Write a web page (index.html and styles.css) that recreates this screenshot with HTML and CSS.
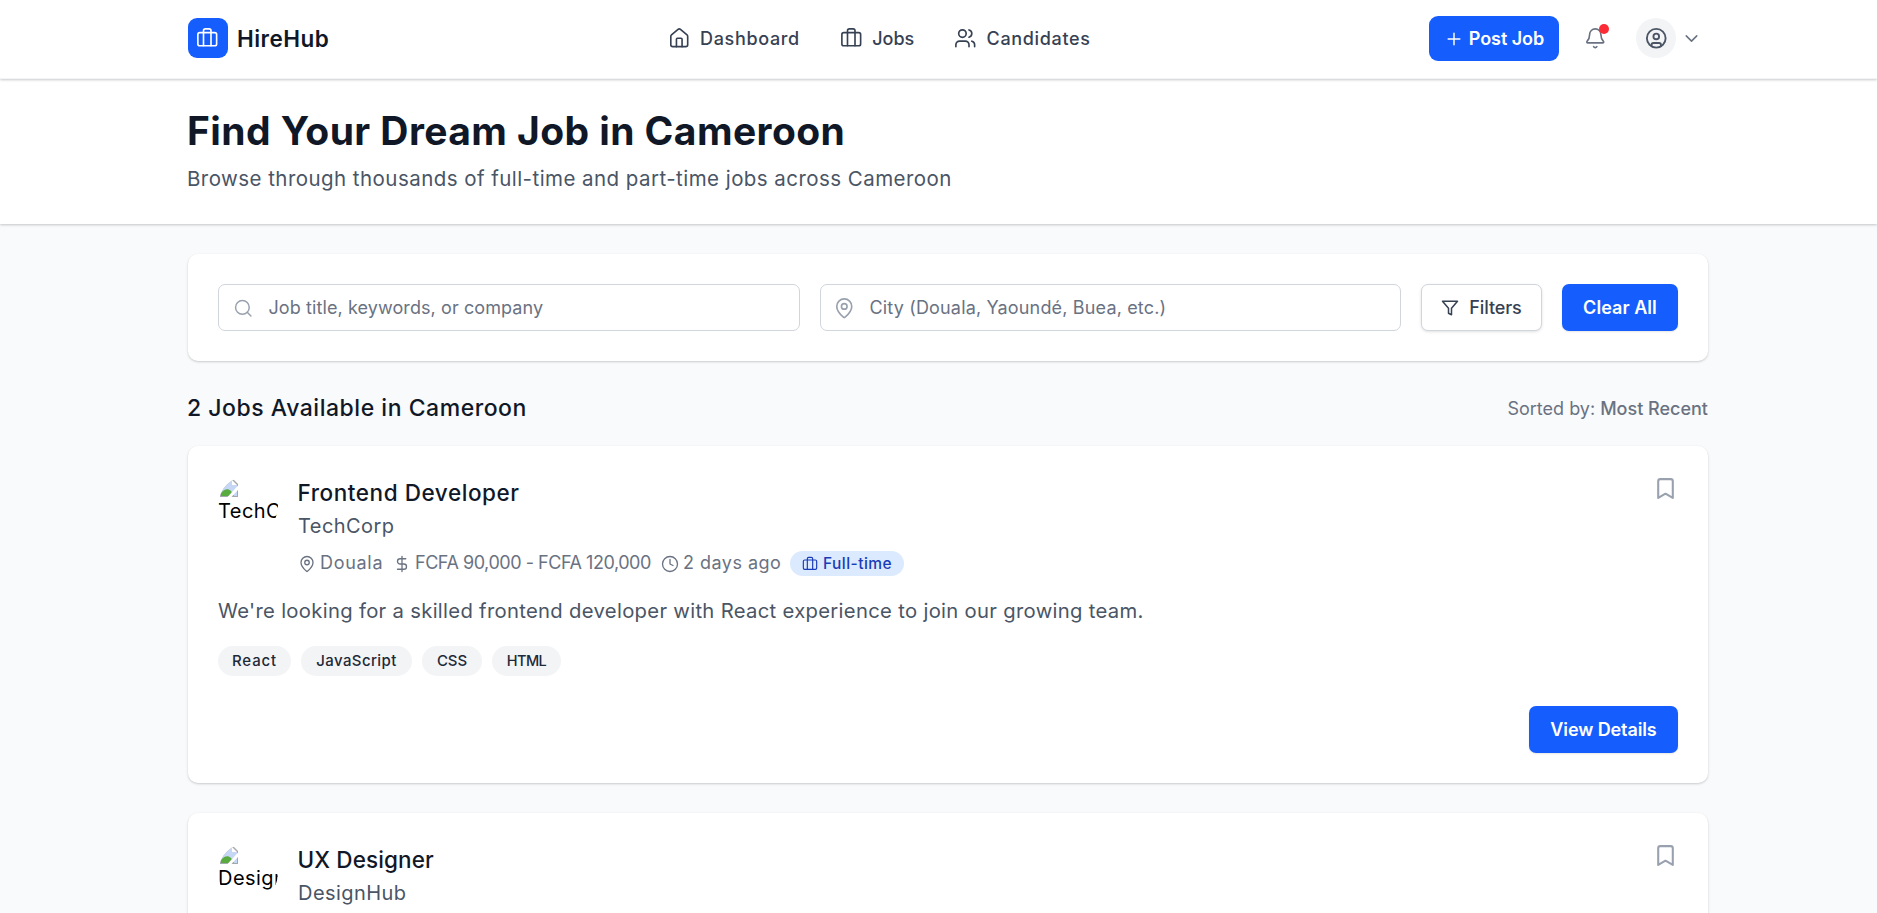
FILE: index.html
```html
<!DOCTYPE html>
<html lang="en">
<head>
<meta charset="utf-8">
<title>HireHub</title>
<link rel="stylesheet" href="styles.css">
</head>
<body>
<svg class="sprite" aria-hidden="true">
  <symbol id="briefcase" viewBox="0 0 24 24"><path d="M16 20V4a2 2 0 0 0-2-2h-4a2 2 0 0 0-2 2v16"/><rect x="2" y="6" width="20" height="14" rx="2"/></symbol>
  <symbol id="house" viewBox="0 0 24 24"><path d="M15 21v-8a1 1 0 0 0-1-1h-4a1 1 0 0 0-1 1v8"/><path d="M3 10a2 2 0 0 1 .709-1.528l7-5.999a2 2 0 0 1 2.582 0l7 5.999A2 2 0 0 1 21 10v9a2 2 0 0 1-2 2H5a2 2 0 0 1-2-2z"/></symbol>
  <symbol id="users" viewBox="0 0 24 24"><path d="M16 21v-2a4 4 0 0 0-4-4H6a4 4 0 0 0-4 4v2"/><circle cx="9" cy="7" r="4"/><path d="M22 21v-2a4 4 0 0 0-3-3.87"/><path d="M16 3.13a4 4 0 0 1 0 7.75"/></symbol>
  <symbol id="plus" viewBox="0 0 24 24"><path d="M5 12h14M12 5v14"/></symbol>
  <symbol id="bell" viewBox="0 0 24 24"><path d="M10.268 21a2 2 0 0 0 3.464 0"/><path d="M3.262 15.326A1 1 0 0 0 4 17h16a1 1 0 0 0 .74-1.673C19.41 13.956 18 12.499 18 8A6 6 0 0 0 6 8c0 4.499-1.411 5.956-2.738 7.326"/></symbol>
  <symbol id="user" viewBox="0 0 24 24"><circle cx="12" cy="12" r="10"/><circle cx="12" cy="10" r="3"/><path d="M7 20.662V19a2 2 0 0 1 2-2h6a2 2 0 0 1 2 2v1.662"/></symbol>
  <symbol id="chevron" viewBox="0 0 24 24"><path d="m6 9 6 6 6-6"/></symbol>
  <symbol id="search" viewBox="0 0 24 24"><circle cx="11" cy="11" r="8"/><path d="m21 21-4.34-4.34"/></symbol>
  <symbol id="pin" viewBox="0 0 24 24"><path d="M20 10c0 4.993-5.539 10.193-7.399 11.799a1 1 0 0 1-1.202 0C9.539 20.193 4 14.993 4 10a8 8 0 0 1 16 0"/><circle cx="12" cy="10" r="3"/></symbol>
  <symbol id="filter" viewBox="0 0 24 24"><path d="M22 3H2l8 9.46V19l4 2v-8.54z"/></symbol>
  <symbol id="dollar" viewBox="0 0 24 24"><path d="M12 2v20"/><path d="M17 5H9.5a3.5 3.5 0 0 0 0 7h5a3.5 3.5 0 0 1 0 7H6"/></symbol>
  <symbol id="clock" viewBox="0 0 24 24"><circle cx="12" cy="12" r="10"/><path d="M12 6v6l4 2"/></symbol>
  <symbol id="bookmark" viewBox="0 0 24 24"><path d="m19 21-7-4-7 4V5a2 2 0 0 1 2-2h10a2 2 0 0 1 2 2z"/></symbol>
  <symbol id="broken" viewBox="0 0 18 18"><g stroke="none"><path d="M0 0h13l5 5v13H0z" fill="#a5a8ab"/><path d="M1 1h11v5h5v11H1z" fill="#c6d7f6"/><path d="M12 1v5h5z" fill="#fff"/><path d="M1 17v-3c3-4 7-5 10-2l3 5z" fill="#5aab3f"/><path d="M18 6.5 7.5 18h4L18 11z" fill="#fff"/></g></symbol>
</svg>

<header class="topbar">
  <div class="container topbar-inner">
    <div class="brand"><span class="brand-mark"><svg class="icon"><use href="#briefcase"/></svg></span><span class="brand-name">HireHub</span></div>
    <nav class="nav">
      <a class="nav-link"><svg class="icon"><use href="#house"/></svg><span>Dashboard</span></a>
      <a class="nav-link nav-jobs"><svg class="icon"><use href="#briefcase"/></svg><span>Jobs</span></a>
      <a class="nav-link"><svg class="icon"><use href="#users"/></svg><span>Candidates</span></a>
    </nav>
    <div class="actions">
      <button class="post"><svg class="icon"><use href="#plus"/></svg><span>Post Job</span></button>
      <div class="bell"><svg class="icon"><use href="#bell"/></svg><i class="dot"></i></div>
      <div class="account"><span class="avatar"><svg class="icon"><use href="#user"/></svg></span><svg class="icon chevron"><use href="#chevron"/></svg></div>
    </div>
  </div>
</header>

<section class="hero">
  <div class="container">
    <h1>Find Your Dream Job in Cameroon</h1>
    <p>Browse through thousands of full-time and part-time jobs across Cameroon</p>
  </div>
</section>

<main class="container main">
  <div class="card search">
    <div class="field"><svg class="icon"><use href="#search"/></svg><span class="ph-job">Job title, keywords, or company</span></div>
    <div class="field"><svg class="icon field-pin"><use href="#pin"/></svg><span class="ph-city">City (Douala, Yaoundé, Buea, etc.)</span></div>
    <button class="btn btn-outline"><svg class="icon"><use href="#filter"/></svg><span>Filters</span></button>
    <button class="btn btn-primary btn-clear">Clear All</button>
  </div>

  <div class="results">
    <h2>2 Jobs Available in Cameroon</h2>
    <div class="sorted">Sorted by: <b>Most Recent</b></div>
  </div>

  <article class="card job">
    <div class="job-head">
      <div class="logo"><svg class="icon"><use href="#broken"/></svg><span>TechCorp</span></div>
      <div class="job-info">
        <h3 class="title-fe">Frontend Developer</h3>
        <div class="company">TechCorp</div>
        <div class="meta">
          <span class="meta-item meta-city"><svg class="icon"><use href="#pin"/></svg><span>Douala</span></span>
          <span class="meta-item meta-pay"><svg class="icon"><use href="#dollar"/></svg><span>FCFA 90,000 - FCFA 120,000</span></span>
          <span class="meta-item meta-time"><svg class="icon"><use href="#clock"/></svg><span>2 days ago</span></span>
          <span class="badge"><svg class="icon"><use href="#briefcase"/></svg><span>Full-time</span></span>
        </div>
      </div>
      <svg class="icon bookmark"><use href="#bookmark"/></svg>
    </div>
    <p class="desc">We're looking for a skilled frontend developer with React experience to join our growing team.</p>
    <div class="tags"><span class="tag tag-react">React</span><span class="tag tag-js">JavaScript</span><span class="tag tag-css">CSS</span><span class="tag tag-html">HTML</span></div>
    <div class="job-foot"><button class="btn btn-primary btn-view">View Details</button></div>
  </article>

  <article class="card job">
    <div class="job-head">
      <div class="logo"><svg class="icon"><use href="#broken"/></svg><span>DesignHub</span></div>
      <div class="job-info">
        <h3 class="title-ux">UX Designer</h3>
        <div class="company">DesignHub</div>
      </div>
      <svg class="icon bookmark"><use href="#bookmark"/></svg>
    </div>
  </article>
</main>
</body>
</html>
```
FILE: styles.css
```css
* { box-sizing: border-box; margin: 0; padding: 0; }
html { height: 100%; overflow: hidden; }
body {
  height: 913px;
  overflow: hidden;
  background: #f9fafb;
  color: #000;
  font: 400 18px/26px Inter, "Liberation Sans", sans-serif;
  white-space: nowrap;
}
button { font: inherit; border: 0; }
.sprite { display: none; }
.icon {
  display: block;
  flex: none;
  width: 22.5px;
  height: 22.5px;
  fill: none;
  stroke: currentColor;
  stroke-width: 1.75;
  stroke-linecap: round;
  stroke-linejoin: round;
}
.container { width: 1520px; margin-left: 188px; }

/* Top bar */
.topbar {
  position: relative;
  height: 79px;
  padding-bottom: 2px;
  background: #fff;
  border-bottom: 1px solid #f3f4f6;
  box-shadow: 0 1px 3px rgba(0, 0, 0, .12), 0 1px 2px rgba(0, 0, 0, .1);
}
.topbar-inner { display: flex; align-items: center; justify-content: space-between; height: 76px; }
.brand { display: flex; align-items: center; gap: 9px; }
.brand-mark {
  display: grid;
  place-items: center;
  width: 40px;
  height: 40px;
  border-radius: 9px;
  background: #155dfc;
  color: #fff;
}
.brand-mark .icon { margin-right: 1.5px; }
.brand-name { padding-top: 1px; font-size: 22.5px; font-weight: 600; letter-spacing: .45px; color: #101828; }
.nav { display: flex; gap: 40px; color: #364153; }
.nav-link { display: flex; align-items: center; gap: 10px; font-weight: 500; letter-spacing: .66px; }
.nav-link span { padding-top: 1px; }
.nav-jobs { letter-spacing: -.1px; }
.actions { display: flex; align-items: center; padding-right: 6px; }
.post {
  display: flex;
  align-items: center;
  justify-content: center;
  gap: 5px;
  width: 130px;
  height: 45px;
  margin-top: 1px;
  border-radius: 9px;
  background: #155dfc;
  color: #fff;
  font-weight: 600;
  letter-spacing: -.05px;
}
.post .icon { width: 20px; height: 20px; }
.bell { position: relative; margin-left: 25px; color: #6a7282; }
.dot {
  position: absolute;
  top: -3px;
  right: -2.5px;
  width: 10px;
  height: 10px;
  border-radius: 50%;
  background: #fb2c36;
}
.account { display: flex; align-items: center; gap: 5px; margin-left: 29.5px; }
.avatar {
  display: grid;
  place-items: center;
  width: 40px;
  height: 40px;
  border-radius: 50%;
  background: #f3f4f6;
  color: #4a5565;
}
.avatar .icon { stroke-width: 2; }
.chevron { width: 21px; height: 21px; color: #6a7282; }

/* Hero */
.hero {
  height: 145px;
  padding: 27px 0 29px;
  background: #fff;
  box-shadow: 0 1px 3px rgba(0, 0, 0, .12), 0 1px 2px rgba(0, 0, 0, .1);
}
.hero h1 {
  margin-left: -1px;
  font-size: 39px;
  line-height: 50px;
  font-weight: 700;
  letter-spacing: .42px;
  color: #101828;
}
.hero p { margin-top: 8px; margin-left: -1px; font-size: 20.5px; line-height: 30px; letter-spacing: .45px; color: #4a5565; }

/* Main column */
.main { padding-top: 30px; }
.card {
  padding: 30px;
  border-radius: 10px;
  background: #fff;
  box-shadow: 0 1px 3px rgba(0, 0, 0, .1), 0 1px 2px rgba(0, 0, 0, .1);
}
.search { display: flex; gap: 20px; height: 107px; }
.field {
  display: flex;
  flex: 1;
  align-items: center;
  gap: 15px;
  height: 47px;
  padding-left: 14px;
  border: 1px solid #d1d5dc;
  border-radius: 7px;
  color: #6a7282;
}
.field .icon { width: 20.5px; height: 20.5px; margin-top: 2px; color: #99a1af; }
.field .field-pin { width: 22.5px; height: 22.5px; margin-top: 1px; margin-left: -2px; }
.ph-job { letter-spacing: .093px; }
.ph-city { margin-left: -.5px; letter-spacing: .16px; }
.btn {
  display: flex;
  align-items: center;
  justify-content: center;
  gap: 10px;
  height: 47px;
  border-radius: 7px;
  box-shadow: 0 1px 2px rgba(0, 0, 0, .1);
}
.btn-outline {
  width: 121px;
  border: 1px solid #d1d5dc;
  background: #fff;
  color: #364153;
  font-weight: 500;
  letter-spacing: -.12px;
  box-shadow: 0 1px 3px rgba(0, 0, 0, .12);
}
.btn-outline .icon { width: 18px; height: 18px; margin-top: 1px; stroke-width: 2; }
.btn-primary { background: #155dfc; color: #fff; font-weight: 600; }
.btn-clear { width: 116px; letter-spacing: .048px; }
.btn-view { width: 149px; letter-spacing: -.106px; }

.results { display: flex; align-items: center; justify-content: space-between; height: 30px; margin: 32px 0 23px; }
.results h2 { margin-left: -1px; font-size: 23px; font-weight: 500; letter-spacing: .53px; color: #101828; }
.sorted { padding-top: 1px; letter-spacing: 0; color: #6a7282; }
.sorted b { font-weight: 500; }

/* Job cards */
.job { margin-bottom: 30px; }
.job-head { display: flex; gap: 20px; }
.logo {
  width: 60px;
  height: 60px;
  overflow: hidden;
  border-radius: 50%;
  font-size: 20px;
  line-height: 26px;
  letter-spacing: .45px;
}
.logo .icon { width: 18px; height: 18px; margin: 3px 0 0 2px; }
.logo span { display: block; width: 60px; margin-top: 1px; overflow: hidden; }
.job-info { flex: 1; padding-top: 2px; }
.job-info h3 { font-size: 22.5px; line-height: 30px; font-weight: 500; color: #101828; margin-left: -.5px; }
.title-fe { letter-spacing: .56px; }
.title-ux { letter-spacing: .12px; }
.company { margin-top: 3px; font-size: 20px; line-height: 30px; letter-spacing: .45px; color: #4a5565; }
.meta { display: flex; align-items: center; height: 25px; margin-top: 10px; color: #6a7282; }
.meta-item { display: flex; align-items: center; gap: 4px; }
.meta-item > span { padding-bottom: 1px; }
.meta .icon { width: 18px; height: 18px; }
.meta-city { width: 95px; letter-spacing: .7px; }
.meta-pay { width: 268px; letter-spacing: -.456px; }
.meta-time { width: 129px; letter-spacing: .48px; }
.badge {
  display: flex;
  align-items: center;
  gap: 5px;
  width: 114px;
  height: 25px;
  padding-left: 12px;
  border-radius: 13px;
  background: #dbeafe;
  color: #193cb8;
  font-size: 15.5px;
  font-weight: 500;
  letter-spacing: .455px;
}
.badge .icon { width: 16px; height: 16px; }
.desc { margin-top: 20px; font-size: 20.25px; line-height: 30px; letter-spacing: .31px; color: #4a5565; }
.tags { display: flex; gap: 10px; margin-top: 20px; }
.tag {
  height: 30px;
  border-radius: 15px;
  background: #f3f4f6;
  color: #1e2939;
  font-size: 15px;
  line-height: 30px;
  font-weight: 500;
  text-align: center;
}
.tag-react { width: 73px; letter-spacing: .838px; }
.tag-js { width: 111px; letter-spacing: .406px; }
.tag-css { width: 60px; letter-spacing: -.095px; }
.tag-html { width: 69px; font-size: 14.5px; letter-spacing: -.6px; }
.job-foot { display: flex; justify-content: flex-end; margin-top: 30px; }
.bookmark { width: 25px; height: 25px; margin-left: auto; stroke-width: 2; color: #99a1af; }
```
